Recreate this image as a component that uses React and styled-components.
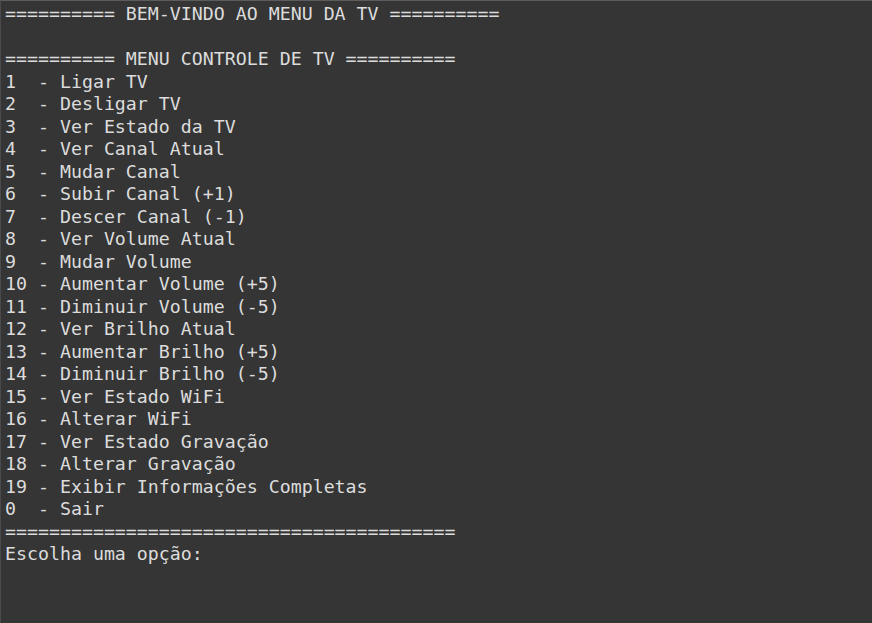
import React from "react";
import styled, { createGlobalStyle } from "styled-components";

const Global = createGlobalStyle`
  html, body { margin: 0; padding: 0; background: #353535; }
  #root { min-height: 100vh; }
`;

const Terminal = styled.div`
  box-sizing: border-box;
  width: 872px;
  height: 623px;
  background: #353535;
  border-top: 1px solid #5c5c5c;
  border-left: 1px solid #4a4a4a;
  padding: 2px 0 0 4px;
  font-family: "DejaVu Sans Mono", "Liberation Mono", monospace;
  font-size: 18.25px;
  line-height: 22.5px;
  color: #dcdcdc;
  overflow: hidden;
`;

const Line = styled.div`
  white-space: pre;
  height: 22.5px;
`;

const lines = [
  "========== BEM-VINDO AO MENU DA TV ==========",
  "",
  "========== MENU CONTROLE DE TV ==========",
  "1  - Ligar TV",
  "2  - Desligar TV",
  "3  - Ver Estado da TV",
  "4  - Ver Canal Atual",
  "5  - Mudar Canal",
  "6  - Subir Canal (+1)",
  "7  - Descer Canal (-1)",
  "8  - Ver Volume Atual",
  "9  - Mudar Volume",
  "10 - Aumentar Volume (+5)",
  "11 - Diminuir Volume (-5)",
  "12 - Ver Brilho Atual",
  "13 - Aumentar Brilho (+5)",
  "14 - Diminuir Brilho (-5)",
  "15 - Ver Estado WiFi",
  "16 - Alterar WiFi",
  "17 - Ver Estado Gravação",
  "18 - Alterar Gravação",
  "19 - Exibir Informações Completas",
  "0  - Sair",
  "=========================================",
  "Escolha uma opção: ",
];

export default function App() {
  return (
    <>
      <Global />
      <Terminal>
        {lines.map((l, i) => (
          <Line key={i}>{l}</Line>
        ))}
      </Terminal>
    </>
  );
}
